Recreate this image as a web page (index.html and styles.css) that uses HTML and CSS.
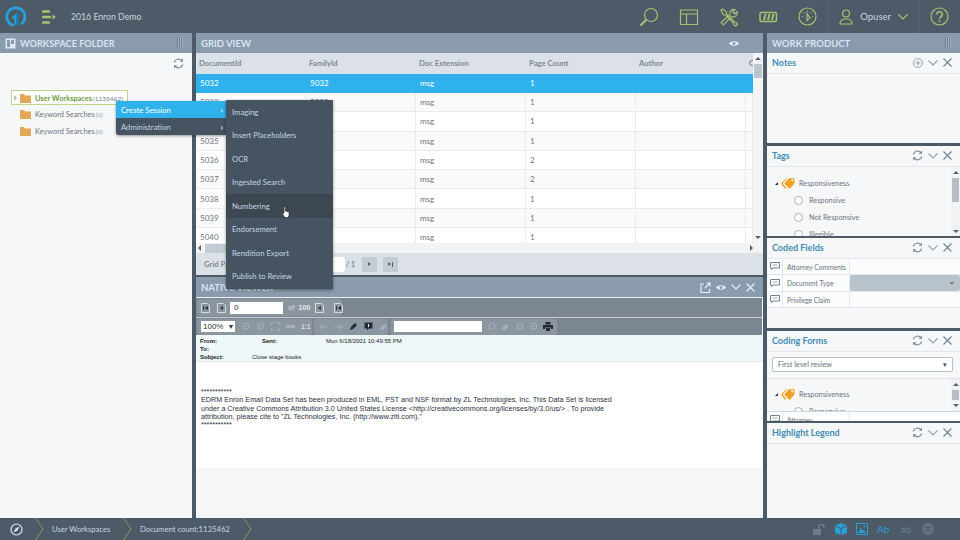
FILE: index.html
```html
<!DOCTYPE html>
<html lang="en">
<head>
  <meta charset="UTF-8">
  <title>2016 Enron Demo</title>
  <link rel="stylesheet" href="styles.css">
</head>
<body>
  <div class="app">

    <header class="topbar">
      <svg class="logo" width="21" height="21" viewBox="0 0 22 22">
        <path d="M9 20.5A9.5 9.5 0 1 1 17 19" fill="none" stroke="#2a9fd8" stroke-width="3"/>
        <path d="M14 20V6L6 13h4v7z" fill="#2a9fd8"/>
        <path d="M14 20V6l-2 2v12z" fill="#1d6f9e"/>
      </svg>
      <svg class="menu-toggle" width="14" height="16" viewBox="0 0 14 16">
        <path d="M1 2.500h6M1 8h7M1 13.500h6" stroke="#a5c26f" stroke-width="2.400" stroke-linecap="round"/>
        <path d="M10.500 5.500 14 8l-3.500 2.500z" fill="#a5c26f"/>
      </svg>
      <span class="demo-name">2016 Enron Demo</span>
      <div class="top-icons">
        <svg width="20" height="20" viewBox="0 0 20 20" fill="none" stroke="#a5c26f" stroke-width="1.200">
          <circle cx="12" cy="8" r="6.500"/><path d="M7.500 12.500 1.500 18.500" stroke-width="2"/>
        </svg>
        <svg width="20" height="18" viewBox="0 0 20 18" fill="none" stroke="#a5c26f" stroke-width="1.200">
          <path d="M1.500 2h17v14.500h-17zM1.500 6h17M7.500 6v10.500"/>
        </svg>
        <svg width="20" height="20" viewBox="0 0 20 20" fill="none" stroke="#a5c26f" stroke-width="1.200">
          <path d="M2 3.500 3.500 2l4 3v2l8 8 2 .5 1 2-1.500 1.500-2-1-.5-2-8-8h-2z"/>
          <path d="M18 4.500 15.500 7 13.500 5l2.500-2.500a4 4 0 0 0-5 5L2 15.500 4.500 18l8-8.500a4 4 0 0 0 5.500-5z"/>
        </svg>
        <svg width="19" height="12" viewBox="0 0 19 12">
          <rect x="1" y="1.500" width="16.500" height="9" rx="1.500" fill="none" stroke="#a5c26f" stroke-width="1.500"/>
          <path d="M4 9l1.500-6h2L6 9zM8 9l1.500-6h2L10 9zM12 9l1.500-6h2L14 9z" fill="#a5c26f"/>
        </svg>
        <svg width="19" height="19" viewBox="0 0 19 19" fill="none" stroke="#a5c26f" stroke-width="1.200">
          <circle cx="9.500" cy="9.500" r="8.500"/>
          <path d="M9 6.500v7l3-2.500z"/>
          <path d="M4 9.500h1M5.500 5.500l.7.700M9.500 3.500v1M13.500 5.500l-.7.700M15 9.500h-1"/>
        </svg>
        <span class="top-sep"></span>
        <div class="user">
          <svg width="14" height="16" viewBox="0 0 14 16" fill="none" stroke="#a5c26f" stroke-width="1.200">
            <circle cx="7" cy="4.500" r="3.500"/><path d="M1 15c0-3 2-4.500 4-5h4c2 .5 4 2 4 5z"/>
          </svg>
          <span>Opuser</span>
          <svg width="10" height="6" viewBox="0 0 10 6" fill="none" stroke="#a5c26f" stroke-width="1.200"><path d="M.5.500 5 5 9.500.500"/></svg>
        </div>
        <span class="top-sep"></span>
        <svg width="19" height="19" viewBox="0 0 19 19" fill="none" stroke="#a5c26f" stroke-width="1.200">
          <circle cx="9.500" cy="9.500" r="8.500"/>
          <path d="M6.800 7.500a2.700 2.700 0 1 1 4 2.300c-.9.500-1.300 1-1.300 2.200" stroke-width="1.500"/>
          <path d="M9.500 13.300v1.700" stroke-width="1.600"/>
        </svg>
      </div>
    </header>

    <main class="main">

      <section class="col col-left">
        <div class="panel-head">
          <svg class="head-icon" width="11" height="11" viewBox="0 0 11 11">
            <path d="M.5.500h10v10H.5z" fill="#dfe9f0"/><path d="M2 2h3v7H2zM6 2h3v4H6z" fill="#8a9bad"/>
          </svg>
          <span class="head-title head-title-small">WORKSPACE FOLDER</span>
          <span class="grip"></span>
        </div>
        <div class="folder-tools">
          <svg class="icon-refresh" width="11" height="11" viewBox="0 0 11 11"><use href="#refresh"/></svg>
        </div>
        <ul class="folders">
          <li class="folder folder-active">
            <span class="tri"></span>
            <svg width="11" height="9" viewBox="0 0 11 9"><use href="#folder"/></svg>
            <span class="folder-name">User Workspaces</span> <span class="folder-count">(1135462)</span>
          </li>
          <li class="folder">
            <svg width="11" height="9" viewBox="0 0 11 9"><use href="#folder"/></svg>
            <span class="folder-name">Keyword Searches</span> <span class="folder-count">(0)</span>
          </li>
          <li class="folder">
            <svg width="11" height="9" viewBox="0 0 11 9"><use href="#folder"/></svg>
            <span class="folder-name">Keyword Searches</span> <span class="folder-count">(0)</span>
          </li>
        </ul>
      </section>

      <section class="col col-center">
        <div class="panel-head">
          <span class="head-title">GRID VIEW</span>
          <svg class="grid-eye" width="10" height="7" viewBox="0 0 10 7"><use href="#eye"/></svg>
        </div>
        <div class="grid-area">
          <div class="grid-main">
            <div class="grid-row grid-header">
              <span>DocumentId</span><span>FamilyId</span><span>Doc Extension</span><span>Page Count</span><span>Author</span><span>C</span>
            </div>
            <div class="grid-row grid-selected">
              <span>5032</span><span>5032</span><span>msg</span><span>1</span><span></span><span></span>
            </div>
            <div class="grid-row grid-alt"><span>5033</span><span>5033</span><span>msg</span><span>1</span><span></span><span></span></div>
            <div class="grid-row"><span>5034</span><span>5034</span><span>msg</span><span>1</span><span></span><span></span></div>
            <div class="grid-row grid-alt"><span>5035</span><span>5035</span><span>msg</span><span>1</span><span></span><span></span></div>
            <div class="grid-row"><span>5036</span><span>5036</span><span>msg</span><span>2</span><span></span><span></span></div>
            <div class="grid-row grid-alt"><span>5037</span><span>5037</span><span>msg</span><span>2</span><span></span><span></span></div>
            <div class="grid-row"><span>5038</span><span>5038</span><span>msg</span><span>1</span><span></span><span></span></div>
            <div class="grid-row grid-alt"><span>5039</span><span>5039</span><span>msg</span><span>1</span><span></span><span></span></div>
            <div class="grid-row"><span>5040</span><span>5040</span><span>msg</span><span>1</span><span></span><span></span></div>
          </div>
          <div class="vscroll">
            <span class="arrow-up"></span>
            <span class="vthumb"></span>
            <span class="arrow-down"></span>
          </div>
        </div>
        <div class="hscroll">
          <span class="arrow-left"></span>
          <span class="hthumb"></span>
          <span class="arrow-right"></span>
        </div>
        <div class="pager">
          <span class="pager-label">Grid Page</span>
          <span class="pager-input"></span>
          <span class="pager-total">/ 1</span>
          <span class="pager-btn"><span class="pager-next"></span></span>
          <span class="pager-btn"><span class="pager-next"></span><span class="pager-bar"></span></span>
        </div>

        <div class="viewer-head">
          <span class="head-title">NATIVE VIEWER</span>
          <div class="viewer-icons">
            <svg width="11" height="11" viewBox="0 0 11 11" fill="none" stroke="#e8eef3" stroke-width="1.200">
              <path d="M4 2H1v8.500h8.500V7M5 6l5-5M6.500 1H10v3.500"/>
            </svg>
            <svg width="10" height="7" viewBox="0 0 10 7"><use href="#eye"/></svg>
            <svg width="10" height="6" viewBox="0 0 10 6" fill="none" stroke="#e8eef3" stroke-width="1.200"><path d="M.5.500 5 5 9.500.500"/></svg>
            <svg width="9" height="9" viewBox="0 0 9 9" fill="none" stroke="#e8eef3" stroke-width="1.200"><path d="M.5.500l8 8M8.500.500l-8 8"/></svg>
          </div>
        </div>
        <div class="pdf-bar">
          <div class="pdf-group pdf-pages">
            <svg width="9" height="10" viewBox="0 0 9 10"><use href="#page-first"/></svg>
            <svg class="pdf-prev" width="9" height="10" viewBox="0 0 9 10"><use href="#page-step"/></svg>
            <span class="pdf-input">0</span>
            <span class="pdf-of">of</span><span class="pdf-num">100</span>
            <svg class="pdf-next" width="9" height="10" viewBox="0 0 9 10"><use href="#page-step"/></svg>
            <svg class="pdf-last" width="9" height="10" viewBox="0 0 9 10"><use href="#page-first"/></svg>
          </div>
        </div>
        <div class="pdf-bar pdf-bar-second">
          <div class="pdf-group pdf-zoom">
            <span class="pdf-select">100%<i>&#9662;</i></span>
            <svg width="9" height="9" viewBox="0 0 9 9"><use href="#lens"/></svg>
            <svg width="9" height="9" viewBox="0 0 9 9"><use href="#lens"/></svg>
            <svg width="9" height="9" viewBox="0 0 9 9" fill="none" stroke="#a7b0ba"><path d="M.5 3V.500H3M6 .500h2.500V3M8.500 6v2.500H6M3 8.500H.500V6"/></svg>
            <span class="pdf-dash"></span>
            <span class="pdf-one">1:1</span>
          </div>
          <div class="pdf-group pdf-notes">
            <svg width="9" height="8" viewBox="0 0 9 8" fill="none" stroke="#a7b0ba"><path d="M8.500 4H1M4 1 1 4l3 3"/></svg>
            <svg width="9" height="8" viewBox="0 0 9 8" fill="none" stroke="#a7b0ba"><path d="M.5 4H8M5 1l3 3-3 3"/></svg>
            <svg width="9" height="9" viewBox="0 0 9 9"><path d="M1 8l1-3 4-4 2 2-4 4z" fill="#222b33"/></svg>
            <svg width="9" height="9" viewBox="0 0 9 9"><path d="M.5.500h8v6H5L3 8.500v-2H.500z" fill="#222b33"/><path d="M4 2h1v3H4z" fill="#fff"/></svg>
            <svg width="9" height="9" viewBox="0 0 9 9"><path d="M1 6l4-4 3 2-4 4H2z" fill="#a7b0ba"/></svg>
          </div>
          <div class="pdf-group pdf-search">
            <span class="pdf-search-input"></span>
            <svg width="9" height="9" viewBox="0 0 9 9" fill="none" stroke="#a7b0ba"><circle cx="5" cy="4" r="3"/><path d="M3 6 1 8"/></svg>
            <svg width="9" height="9" viewBox="0 0 9 9"><path d="M1 6l4-4 3 2-4 4H2z" fill="#a7b0ba"/></svg>
            <svg width="9" height="9" viewBox="0 0 9 9"><use href="#lens"/></svg>
            <svg width="9" height="9" viewBox="0 0 9 9"><use href="#lens"/></svg>
            <svg width="10" height="9" viewBox="0 0 10 9"><path d="M2.500 0h5v2.500h-5zM0 3h10v4H8V5.500H2V7H0zM3 6h4v3H3z" fill="#222b33"/></svg>
          </div>
        </div>
        <div class="mail-head">
          <div class="mail-line"><b class="mail-from">From:</b><b class="mail-sent">Sent:</b><span>Mon 6/18/2001 10:49:55 PM</span></div>
          <div class="mail-line"><b>To:</b></div>
          <div class="mail-line"><b class="mail-subject">Subject:</b><span>Close stage books</span></div>
        </div>
        <div class="mail-body">
          <p>***********</p>
          <p>EDRM Enron Email Data Set has been produced in EML, PST and NSF format by ZL Technologies, Inc. This Data Set is licensed</p>
          <p>under a Creative Commons Attribution 3.0 United States License &lt;http://creativecommons.org/licenses/by/3.0/us/&gt; . To provide</p>
          <p>attribution, please cite to "ZL Technologies, Inc. (http://www.zlti.com)."</p>
          <p>***********</p>
        </div>
        <div class="mail-rest"></div>
      </section>

      <section class="col col-right">
        <div class="panel-head">
          <span class="head-title">WORK PRODUCT</span>
          <span class="grip"></span>
        </div>

        <div class="wp wp-notes">
          <div class="wp-head">
            <span class="wp-title">Notes</span>
            <svg width="10" height="10" viewBox="0 0 10 10" fill="none" stroke="#8fa2b3"><circle cx="5" cy="5" r="4.500"/><path d="M5 2.500v5M2.500 5h5"/></svg>
            <svg width="10" height="6" viewBox="0 0 10 6"><use href="#chev"/></svg>
            <svg width="9" height="9" viewBox="0 0 9 9"><use href="#close"/></svg>
          </div>
        </div>

        <div class="wp wp-tags">
          <div class="wp-head">
            <span class="wp-title">Tags</span>
            <svg width="11" height="11" viewBox="0 0 11 11"><use href="#refresh"/></svg>
            <svg width="10" height="6" viewBox="0 0 10 6"><use href="#chev"/></svg>
            <svg width="9" height="9" viewBox="0 0 9 9"><use href="#close"/></svg>
          </div>
          <div class="tag-box">
            <div class="tag-list">
              <div class="tag-root">
                <span class="tag-tri"></span>
                <svg width="14" height="12" viewBox="0 0 13 11"><use href="#tag"/></svg>
                <span>Responsiveness</span>
              </div>
              <div class="tag-item"><span class="radio"></span>Responsive</div>
              <div class="tag-item"><span class="radio"></span>Not Responsive</div>
              <div class="tag-item"><span class="radio"></span>Illegible</div>
            </div>
            <div class="side-scroll">
              <span class="arrow-up"></span>
              <span class="side-thumb"></span>
              <span class="arrow-down"></span>
            </div>
          </div>
        </div>

        <div class="wp wp-coded">
          <div class="wp-head">
            <span class="wp-title">Coded Fields</span>
            <svg width="11" height="11" viewBox="0 0 11 11"><use href="#refresh"/></svg>
            <svg width="10" height="6" viewBox="0 0 10 6"><use href="#chev"/></svg>
            <svg width="9" height="9" viewBox="0 0 9 9"><use href="#close"/></svg>
          </div>
          <div class="coded-row">
            <span class="coded-icon"><svg width="10" height="8" viewBox="0 0 10 8"><use href="#note"/></svg></span>
            <span class="coded-label">Attorney Comments</span>
            <span class="coded-value"></span>
          </div>
          <div class="coded-row">
            <span class="coded-icon"><svg width="10" height="8" viewBox="0 0 10 8"><use href="#note"/></svg></span>
            <span class="coded-label">Document Type</span>
            <span class="coded-value coded-select"><i>&#8964;</i></span>
          </div>
          <div class="coded-row">
            <span class="coded-icon"><svg width="10" height="8" viewBox="0 0 10 8"><use href="#note"/></svg></span>
            <span class="coded-label">Privilege Claim</span>
            <span class="coded-value"></span>
          </div>
        </div>

        <div class="wp wp-forms">
          <div class="wp-head">
            <span class="wp-title">Coding Forms</span>
            <svg width="11" height="11" viewBox="0 0 11 11"><use href="#refresh"/></svg>
            <svg width="10" height="6" viewBox="0 0 10 6"><use href="#chev"/></svg>
            <svg width="9" height="9" viewBox="0 0 9 9"><use href="#close"/></svg>
          </div>
          <div class="forms-select-wrap">
            <div class="forms-select">First level review<i>&#9662;</i></div>
          </div>
          <div class="tag-box forms-tree">
            <div class="tag-list">
              <div class="tag-root">
                <span class="tag-tri"></span>
                <svg width="14" height="12" viewBox="0 0 13 11"><use href="#tag"/></svg>
                <span>Responsiveness</span>
              </div>
              <div class="tag-item"><span class="radio"></span>Responsive</div>
            </div>
            <div class="side-scroll">
              <span class="arrow-up"></span>
              <span class="side-thumb forms-thumb"></span>
              <span class="arrow-down"></span>
            </div>
          </div>
          <div class="coded-row forms-coded">
            <span class="coded-icon"><svg width="10" height="8" viewBox="0 0 10 8"><use href="#note"/></svg></span>
            <span class="coded-label">Attorney</span>
            <span class="coded-value"></span>
          </div>
        </div>

        <div class="wp wp-legend">
          <div class="wp-head">
            <span class="wp-title">Highlight Legend</span>
            <svg width="11" height="11" viewBox="0 0 11 11"><use href="#refresh"/></svg>
            <svg width="10" height="6" viewBox="0 0 10 6"><use href="#chev"/></svg>
            <svg width="9" height="9" viewBox="0 0 9 9"><use href="#close"/></svg>
          </div>
        </div>
      </section>
    </main>

    <footer class="footer">
      <svg class="compass" width="13" height="13" viewBox="0 0 13 13" fill="none" stroke="#dfe6ec" stroke-width="1.200">
        <circle cx="6.500" cy="6.500" r="5.500"/><path d="M9.500 3.500 7.500 7.500l-4 2 2-4z" fill="#dfe6ec" stroke="none"/>
      </svg>
      <svg class="crumb-sep" width="9" height="22" viewBox="0 0 9 22"><use href="#crumb"/></svg>
      <span class="crumb crumb-first">User Workspaces</span>
      <svg class="crumb-sep" width="9" height="22" viewBox="0 0 9 22"><use href="#crumb"/></svg>
      <span class="crumb crumb-second">Document count:1135462</span>
      <svg class="crumb-sep" width="9" height="22" viewBox="0 0 9 22"><use href="#crumb"/></svg>
      <div class="foot-icons">
        <svg width="13" height="11" viewBox="0 0 13 11">
          <path d="M0 5h8v6H0z" fill="#6f7d8a"/><path d="M6 5V3a2.500 2.500 0 0 1 5-.5V4" fill="none" stroke="#6f7d8a" stroke-width="1.500"/>
        </svg>
        <svg width="12" height="12" viewBox="0 0 12 12">
          <path d="M6 0l6 2.500L6 5 0 2.500z" fill="#2a9fd8"/><path d="M0 3.500l5.500 2.300V12L0 9.700zM12 3.500 6.500 5.800V12L12 9.700z" fill="#2a9fd8"/>
        </svg>
        <svg width="12" height="12" viewBox="0 0 12 12">
          <path d="M.5.500h11v11H.5z" fill="none" stroke="#2a9fd8"/><path d="M2 10l3-5 2 3 1-1 2 3z" fill="#2a9fd8"/><circle cx="8.500" cy="3.500" r="1" fill="#2a9fd8"/>
        </svg>
        <span class="foot-ab foot-ab-on">Ab</span>
        <span class="foot-ab">ab</span>
        <svg width="12" height="12" viewBox="0 0 12 12" fill="none" stroke="#6f7d8a">
          <circle cx="6" cy="6" r="5.500"/><ellipse cx="6" cy="6" rx="2.500" ry="5.500"/><path d="M.5 6h11M1.500 3h9M1.500 9h9"/>
        </svg>
      </div>
    </footer>

    <!-- context menus sit over the panels -->
    <ul class="ctx-menu">
      <li class="ctx-on">Create Session<i>&#8250;</i></li>
      <li>Administration<i>&#8250;</i></li>
    </ul>
    <ul class="ctx-sub">
      <li>Imaging</li>
      <li>Insert Placeholders</li>
      <li>OCR</li>
      <li>Ingested Search</li>
      <li class="ctx-hover">Numbering</li>
      <li>Endorsement</li>
      <li>Rendition Export</li>
      <li>Publish to Review</li>
    </ul>
    <svg class="hand" width="8" height="12" viewBox="0 0 8 12">
      <path d="M2 1a.7.7 0 0 1 1.300 0v4l3.700 1v3.500L6 11.500H3L.5 8V6.500l1.500 1z" fill="#fff" stroke="#222" stroke-width=".6"/>
    </svg>
  </div>

  <svg class="defs" width="0" height="0">
    <defs>
      <symbol id="folder" viewBox="0 0 11 9"><path d="M0 0h4l1 1.500h6V9H0z" fill="#e3a857"/></symbol>
      <symbol id="refresh" viewBox="0 0 11 11">
        <path d="M1.200 4.500A4.500 4.500 0 0 1 9 2.800M9.800 6.500A4.500 4.500 0 0 1 2 8.200" fill="none" stroke="#7c8c9b" stroke-width="1.100"/>
        <path d="M10 .5v3.300H6.700zM1 10.500V7.200h3.300z" fill="#7c8c9b"/>
      </symbol>
      <symbol id="chev" viewBox="0 0 10 6"><path d="M.5.500 5 5 9.500.500" fill="none" stroke="#8fa2b3" stroke-width="1.100"/></symbol>
      <symbol id="close" viewBox="0 0 9 9"><path d="M.5.500l8 8M8.500.500l-8 8" fill="none" stroke="#6f8496" stroke-width="1.100"/></symbol>
      <symbol id="eye" viewBox="0 0 10 7">
        <path d="M0 3.500C2 .5 8 .5 10 3.500 8 6.500 2 6.500 0 3.500z" fill="#e8eef3"/><circle cx="5" cy="3.500" r="1.500" fill="#8a9bad"/>
      </symbol>
      <symbol id="tag" viewBox="0 0 13 11">
        <path d="M0 6l5-5h1L1.500 6 5 10l-1 1z" fill="#f0a020"/>
        <path d="M3 6l4.500-5H12.500v5L8 11z" fill="#f0a020"/><circle cx="10.500" cy="3" r="1" fill="#fff"/>
      </symbol>
      <symbol id="note" viewBox="0 0 10 8">
        <path d="M.5.500h9v5.500H3L1.500 7.500V6H.500z" fill="none" stroke="#6f8496"/><path d="M2.500 3h5" stroke="#9fb0be"/>
      </symbol>
      <symbol id="lens" viewBox="0 0 9 9">
        <circle cx="5" cy="4" r="3" fill="none" stroke="#a7b0ba"/><path d="M3 6 1 8M3.500 4h3" stroke="#a7b0ba"/>
      </symbol>
      <symbol id="page-first" viewBox="0 0 9 10">
        <path d="M.5.500h6l2 2v7h-8z" fill="none" stroke="#d5dade"/><path d="M2 3h1v4H2zM7 3v4L3.500 5z" fill="#2d3741"/>
      </symbol>
      <symbol id="page-step" viewBox="0 0 9 10">
        <path d="M.5.500h6l2 2v7h-8z" fill="none" stroke="#d5dade"/><path d="M6 3v4L3 5z" fill="#2d3741"/>
      </symbol>
      <symbol id="crumb" viewBox="0 0 9 22"><path d="M.5 0l7.500 11-7.500 11" fill="none" stroke="#7f9a5c"/></symbol>
    </defs>
  </svg>
</body>
</html>
```

FILE: styles.css
```css
* {
  box-sizing: border-box;
}

body {
  margin: 0;
  font-family: 'Lato', 'Liberation Sans', sans-serif;
  font-size: 8px;
  color: #6b7580;
  overflow: hidden;
}

ul {
  list-style: none;
  margin: 0;
  padding: 0;
}

svg {
  flex: none;
}

.app {
  position: relative;
  width: 960px;
  height: 540px;
  display: flex;
  flex-direction: column;
  background: #4d5b69;
  overflow: hidden;
}

.defs {
  position: absolute;
}

/* top bar */
.topbar {
  height: 33px;
  flex: none;
  display: flex;
  align-items: center;
  padding-left: 5px;
}

.menu-toggle {
  margin-left: 16px;
}

.demo-name {
  margin-left: 15px;
  font-size: 8.700px;
  color: #c9d3dc;
}

.top-icons {
  margin-left: auto;
  display: flex;
  align-items: center;
  gap: 20px;
  padding-right: 11px;
}

.top-sep {
  width: 1px;
  height: 33px;
  background: #5a6876;
  margin-left: -10px;
  margin-right: -9px;
}

.user {
  display: flex;
  align-items: center;
  gap: 7px;
  font-size: 9.500px;
  color: #c9d3dc;
}

/* main columns */
.main {
  flex: 1;
  display: flex;
  gap: 4px;
  min-height: 0;
}

.col {
  display: flex;
  flex-direction: column;
  background: #f6f7f9;
  overflow: hidden;
}

.col-left {
  width: 192px;
}

.col-center {
  width: 567px;
}

.col-right {
  width: 193px;
}

.panel-head {
  height: 20px;
  flex: none;
  display: flex;
  align-items: center;
  padding: 0 9px 0 5px;
  background: #8a9bad;
}

.head-icon {
  margin-right: 4px;
}

.head-title {
  font-size: 9.500px;
  font-weight: 700;
  color: #d6e6f2;
}

.head-title-small {
  font-size: 9.200px;
}

.grip {
  margin-left: auto;
  width: 6px;
  height: 10px;
  background: repeating-linear-gradient(90deg, #6f8091 0 1px, #a4b1be 1px 2px);
}

/* workspace folders */
.folder-tools {
  height: 22px;
  display: flex;
  justify-content: flex-end;
  align-items: center;
  padding-right: 8px;
  border-bottom: 1px solid #f1f2f5;
}

.folders {
  padding: 15px 0 0 11px;
}

.folder {
  height: 16.500px;
  display: flex;
  align-items: center;
  gap: 4px;
  padding-left: 9px;
  width: 117px;
  white-space: nowrap;
}

.folder-name {
  font-size: 7.400px;
}

.folder-count {
  font-size: 6.500px;
  color: #9aa2aa;
  margin-left: -3px;
}

.folder-active {
  height: 15px;
  margin-bottom: 1.500px;
  padding: 1px 0 0 2px;
  border: 1px solid #bcd68c;
  background: #fff;
}

.folder-active .tri {
  margin-right: -1px;
}

.folder-active .folder-name {
  color: #6d9a3c;
  font-weight: 700;
}

.folder-active .folder-count {
  color: #77808a;
}

.tri {
  flex: none;
  width: 0;
  height: 0;
  border-left: 3px solid #b5bcc3;
  border-top: 3px solid transparent;
  border-bottom: 3px solid transparent;
}

/* grid view */
.grid-eye {
  margin-left: auto;
  margin-right: 15px;
}

.grid-area {
  height: 190px;
  flex: none;
  display: flex;
  background: #fff;
}

.grid-main {
  width: 557px;
  overflow: hidden;
}

.grid-row {
  display: grid;
  grid-template-columns: 110px 110px 110px 110px 110px 7px;
  height: 19.300px;
  align-items: center;
  border-bottom: 1px solid #e8ecef;
}

.grid-row span {
  height: 100%;
  display: flex;
  align-items: center;
  padding-left: 4px;
  border-right: 1px solid #e8ecef;
  font-size: 8px;
  white-space: nowrap;
}

.grid-alt {
  background: #fafafa;
}

.grid-header {
  height: 20.700px;
  background: #dce1e7;
  border-bottom: 0;
  font-weight: 700;
  color: #7d8894;
}

.grid-header span {
  padding-left: 3px;
  border-right: 0;
  font-size: 7.700px;
}

.grid-selected {
  background: #2fb2ec;
  border-bottom: 0;
}

.grid-selected span {
  color: #fff;
  border-right: 0;
}

.vscroll {
  width: 10px;
  display: flex;
  flex-direction: column;
  align-items: center;
  background: #f4f5f6;
}

.arrow-up,
.arrow-down {
  width: 0;
  height: 0;
  margin: 4px 0;
  border-left: 3px solid transparent;
  border-right: 3px solid transparent;
}

.arrow-up {
  border-bottom: 3px solid #56616c;
}

.arrow-down {
  margin-top: auto;
  border-top: 3px solid #56616c;
}

.vthumb {
  width: 8px;
  height: 14px;
  background: #bcc6cf;
}

.hscroll {
  height: 10px;
  flex: none;
  display: flex;
  align-items: center;
  background: #f2f3f4;
}

.arrow-left,
.arrow-right {
  width: 0;
  height: 0;
  border-top: 3px solid transparent;
  border-bottom: 3px solid transparent;
}

.arrow-left {
  margin-left: 2px;
  border-right: 3px solid #56616c;
}

.arrow-right {
  margin-left: auto;
  margin-right: 10px;
  border-left: 3px solid #56616c;
}

.hthumb {
  width: 120px;
  height: 9px;
  margin-left: 4px;
  background: #c3ccd4;
}

.pager {
  height: 22px;
  flex: none;
  display: flex;
  align-items: center;
  padding-left: 8px;
  background: #dce1e7;
  font-size: 7.700px;
  font-weight: 700;
  color: #7d8894;
}

.pager-label {
  width: 111px;
  white-space: nowrap;
}

.pager-input {
  width: 30px;
  height: 15px;
  margin-top: 1px;
  background: #fff;
  border-radius: 0 3px 3px 0;
}

.pager-total {
  margin-left: 1px;
  width: 16px;
  font-size: 7px;
}

.pager-btn {
  width: 15px;
  height: 15px;
  margin-right: 6px;
  display: flex;
  align-items: center;
  justify-content: center;
  gap: 1px;
  background: #c3ccd4;
  border-radius: 1px;
}

.pager-next {
  width: 0;
  height: 0;
  border-left: 3px solid #56616c;
  border-top: 2.500px solid transparent;
  border-bottom: 2.500px solid transparent;
}

.pager-bar {
  width: 1px;
  height: 5px;
  background: #56616c;
}

/* native viewer */
.viewer-head {
  height: 23px;
  flex: none;
  display: flex;
  align-items: center;
  padding-left: 5px;
  background: #8a9bad;
  border-top: 2px solid #4d5b69;
  border-bottom: 1px solid #eef1f4;
}

.viewer-icons {
  margin-left: auto;
  display: flex;
  align-items: center;
  gap: 5px;
  padding-right: 8px;
}

.pdf-bar {
  height: 20px;
  flex: none;
  display: flex;
  align-items: center;
  background: #7b8692;
  border-bottom: 1px solid #c8ced4;
  margin-right: 1px;
}

.pdf-bar-second {
  height: 17px;
  border-bottom: 0;
}

.pdf-group {
  height: 17px;
  display: flex;
  align-items: center;
  background: #8b96a1;
  border-radius: 3px;
}

.pdf-pages {
  width: 145px;
  margin-left: 1px;
  padding-left: 4px;
}

.pdf-prev {
  margin-left: 7px;
}

.pdf-next {
  margin-left: 5px;
}

.pdf-last {
  margin-left: 10px;
}

.pdf-bar-second .pdf-group {
  height: 16px;
  gap: 6px;
}

.pdf-input {
  flex: none;
  width: 53px;
  height: 12px;
  margin-left: 4px;
  padding-left: 4px;
  background: #fff;
  color: #333;
  font-family: 'Liberation Sans', sans-serif;
  font-size: 8px;
  line-height: 12px;
}

.pdf-of,
.pdf-num {
  font-family: 'Liberation Sans', sans-serif;
  font-size: 7px;
  font-weight: 700;
  color: #c3cad1;
}

.pdf-of {
  margin-left: 5px;
}

.pdf-num {
  color: #e8ecef;
  margin-left: 4px;
}

.pdf-zoom {
  width: 115px;
  margin-left: 1px;
  padding-left: 4px;
}

.pdf-notes {
  width: 74px;
  margin-left: 2px;
  padding-left: 5px;
}

.pdf-search {
  width: 166px;
  margin-left: 3px;
  padding-left: 3px;
}

.pdf-bar-second .pdf-search {
  gap: 5px;
}

.pdf-select {
  width: 34px;
  height: 11px;
  padding-left: 2px;
  display: flex;
  justify-content: space-between;
  background: #fff;
  color: #333;
  font-family: 'Liberation Sans', sans-serif;
  font-size: 8px;
  line-height: 11px;
}

.pdf-select i {
  font-style: normal;
  padding-right: 2px;
}

.pdf-dash {
  width: 9px;
  height: 3px;
  background: #a7b0ba;
}

.pdf-one {
  font-family: 'Liberation Sans', sans-serif;
  font-size: 6.500px;
  font-weight: 700;
  color: #d8dde1;
}

.pdf-search-input {
  width: 88px;
  height: 11px;
  background: #fff;
}

.mail-head {
  height: 27px;
  flex: none;
  padding: 2px 0 0 4px;
  background: #eef7fa;
  border-bottom: 1px solid #dfe5e8;
  font-family: 'Liberation Sans', sans-serif;
  font-size: 6px;
  color: #222;
}

.mail-line {
  height: 8px;
  display: flex;
  line-height: 8px;
}

.mail-from {
  width: 62px;
}

.mail-sent {
  width: 64px;
}

.mail-subject {
  width: 52px;
}

.mail-body {
  height: 106px;
  flex: none;
  padding: 26px 0 0 5px;
  background: #fff;
  font-family: 'Liberation Sans', sans-serif;
  font-size: 7.200px;
  line-height: 8.300px;
  color: #2b3040;
}

.mail-body p {
  margin: 0;
  white-space: nowrap;
}

.mail-rest {
  flex: 1;
  background: #f5f6f8;
}

/* work product */
.wp {
  flex: none;
  overflow: hidden;
}

.wp-notes {
  height: 93px;
  border-bottom: 3px solid #4d5b69;
}

.wp-tags {
  height: 92px;
  border-bottom: 2px solid #4d5b69;
}

.wp-coded {
  height: 93px;
  border-bottom: 3px solid #4d5b69;
}

.wp-forms {
  height: 92px;
  border-bottom: 2px solid #4d5b69;
}

.wp-legend {
  flex: 1;
}

.wp-head {
  height: 20.500px;
  display: flex;
  align-items: center;
  gap: 5px;
  padding: 0 8px 0 5px;
  border-bottom: 1px solid #e3e7ec;
}

.wp-title {
  margin-right: auto;
  font-size: 9px;
  font-weight: 700;
  color: #3f8bb3;
}

.tag-box {
  height: 70px;
  display: flex;
  overflow: hidden;
}

.tag-list {
  flex: 1;
  padding-top: 8px;
}

.tag-root {
  height: 17px;
  display: flex;
  align-items: center;
  padding-left: 8px;
  font-size: 7.300px;
}

.tag-root svg {
  margin: 0 4px 0 3px;
}

.tag-tri {
  width: 0;
  height: 0;
  border-bottom: 3px solid #2c333a;
  border-left: 3px solid transparent;
}

.tag-item {
  height: 17px;
  display: flex;
  align-items: center;
  padding-left: 27px;
  gap: 6px;
  font-size: 7.300px;
  white-space: nowrap;
}

.radio {
  width: 9px;
  height: 9px;
  border: 1px solid #a9b1b9;
  border-radius: 50%;
  background: #fff;
}

.side-scroll {
  width: 9px;
  display: flex;
  flex-direction: column;
  align-items: center;
  background: #f1f2f4;
}

.side-thumb {
  width: 7px;
  height: 24px;
  background: #b6bdc4;
}

.coded-row {
  height: 16.500px;
  display: flex;
  border-bottom: 1px solid #e3e7ec;
  background: #fbfcfd;
}

.coded-icon {
  width: 16px;
  display: flex;
  align-items: center;
  justify-content: center;
  border-right: 1px solid #e3e7ec;
}

.coded-label {
  width: 67px;
  padding-left: 4px;
  border-right: 1px solid #e3e7ec;
  font-size: 6.700px;
  line-height: 16px;
  white-space: nowrap;
}

.coded-value {
  flex: 1;
}

.coded-select {
  display: flex;
  justify-content: flex-end;
  background: #b8c2cb;
  border-radius: 2px;
  color: #3b4651;
}

.coded-select i {
  font-style: normal;
  padding-right: 4px;
  font-size: 9px;
  line-height: 12px;
}

.forms-select-wrap {
  height: 27px;
  padding: 5px 7px 0 5px;
  border-bottom: 1px solid #e3e7ec;
}

.forms-select {
  height: 15px;
  display: flex;
  justify-content: space-between;
  padding: 0 5px;
  background: #fff;
  border: 1px solid #b8c0c8;
  border-radius: 2px;
  font-size: 7.300px;
  line-height: 13px;
}

.forms-select i {
  font-style: normal;
  color: #3b4651;
}

.forms-tree {
  height: 33px;
  border-bottom: 1px solid #cfd8e2;
}

.forms-tree .tag-list {
  padding-top: 7px;
}

.forms-thumb {
  height: 10px;
}

.forms-coded {
  height: 16px;
}

/* footer */
.footer {
  height: 22px;
  flex: none;
  display: flex;
  align-items: center;
  padding-left: 10px;
  font-size: 7.700px;
  color: #c9d3dc;
}

.compass {
  margin-right: 12px;
}

.crumb {
  padding-left: 8px;
  white-space: nowrap;
}

.crumb-first {
  width: 79px;
}

.crumb-second {
  width: 111px;
}

.foot-icons {
  margin-left: auto;
  height: 22px;
  display: flex;
  align-items: center;
  gap: 9px;
  padding: 0 26px 0 0;
}

.foot-ab {
  margin-right: 2px;
  font-size: 10px;
  color: #6f7d8a;
}

.foot-ab-on {
  color: #2a9fd8;
}

/* context menus */
.ctx-menu,
.ctx-sub {
  position: absolute;
  background: #465360;
  color: #c4d5e5;
  font-size: 7.700px;
  box-shadow: 0 1px 3px rgba(0, 0, 0, 0.4);
}

.ctx-menu {
  left: 116px;
  top: 101px;
  width: 110px;
  border-radius: 0 0 0 3px;
}

.ctx-menu li {
  height: 17px;
  display: flex;
  align-items: center;
  justify-content: space-between;
  padding: 0 3px 0 5px;
}

.ctx-menu i {
  font-style: normal;
  font-weight: 700;
  color: #fff;
}

.ctx-on {
  background: #2fb2ec;
  color: #fff;
}

.ctx-sub {
  left: 226px;
  top: 100px;
  width: 107px;
  height: 189px;
}

.ctx-sub li {
  height: 23.500px;
  display: flex;
  align-items: center;
  padding-left: 6px;
}

.ctx-hover {
  background: #3c4751;
}

.hand {
  position: absolute;
  left: 282px;
  top: 206px;
}
```
